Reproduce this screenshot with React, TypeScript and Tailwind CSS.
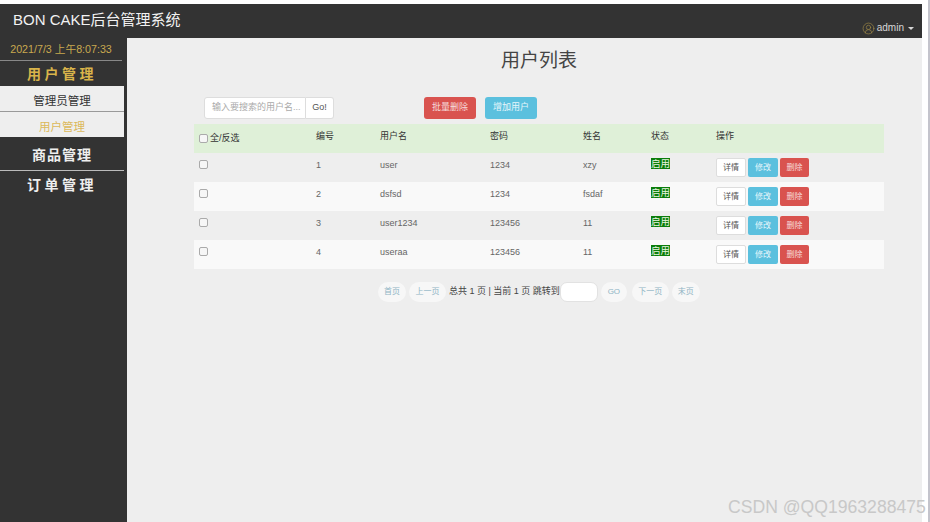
import { CircleUserRound } from 'lucide-react';

const font = "font-['Liberation_Sans','Noto_Sans_CJK_SC',sans-serif]";

const users = [
  { id: 1, name: 'user', pwd: '1234', real: 'xzy' },
  { id: 2, name: 'dsfsd', pwd: '1234', real: 'fsdaf' },
  { id: 3, name: 'user1234', pwd: '123456', real: '11' },
  { id: 4, name: 'useraa', pwd: '123456', real: '11' },
];

function PageButton({ label, className }: { label: string; className: string }) {
  return (
    <span className={`flex h-[20px] items-center justify-center rounded-full bg-[#f7f7f7] text-[8px] text-[#8fb4c4] ${className}`}>
      {label}
    </span>
  );
}

function Check() {
  return <input type="checkbox" className="block h-[9px] w-[9px] shrink-0 appearance-none rounded-[2px] border border-[#aaaaaa] bg-[#f6f6f6]" />;
}

export default function App() {
  return (
    <div className={`${font} relative flex h-[522px] w-[930px] overflow-hidden bg-white pt-1`}>
      <div className="flex h-[518px] w-[922px] flex-col bg-[#eeeeee]">
        {/* Header */}
        <div className="flex h-[34px] shrink-0 items-center justify-between bg-[#333333] pl-[13px] pr-[8px]">
          <span className="mb-[4px] text-[15px] leading-none text-[#f2f2f2]">BON CAKE后台管理系统</span>
          <span className="mt-[14px] flex items-center gap-[2px] text-[10px] leading-none text-[#d8d8d8]">
            <CircleUserRound size={13} strokeWidth={1.2} className="text-[#a08a45]" />
            admin
            <span className="ml-[2px] h-0 w-0 border-x-[3px] border-t-[3px] border-x-transparent border-t-[#d8d8d8]" />
          </span>
        </div>

        <div className="flex min-h-0 flex-1">
          {/* Sidebar */}
          <div className="flex w-[127px] shrink-0 flex-col bg-[#333333]">
            <div className="flex h-[23px] w-[122px] items-center justify-center border-b border-[#888888] text-[10.7px] text-[#c9a94f]">
              2021/7/3 上午8:07:33
            </div>
            <div className="flex h-[25px] w-[124px] items-center justify-center pt-[1px] text-[14px] font-bold tracking-[3.5px] text-[#d9b44a]">
              用户管理
            </div>
            <div className="flex h-[26px] w-[124px] items-center justify-center border-b border-[#999999] bg-[#eeeeee] pt-[6px] text-[11.5px] text-[#333333]">
              管理员管理
            </div>
            <div className="flex h-[25px] w-[124px] items-center justify-center bg-[#eeeeee] pt-[6px] text-[11.5px] text-[#dcb95a]">
              用户管理
            </div>
            <div className="flex h-[34px] w-[124px] items-center justify-center border-b border-[#bbbbbb] pt-[3px] text-[14px] font-bold tracking-[1px] text-[#eeeeee]">
              商品管理
            </div>
            <div className="flex h-[28px] w-[124px] items-center justify-center text-[14px] font-bold tracking-[3.5px] text-[#eeeeee]">
              订单管理
            </div>
          </div>

          {/* Content */}
          <div className="flex-1 pl-[67px]">
            <div className="w-[690px]">
              <h1 className="pt-[10px] text-center text-[19px] font-normal leading-[26px] text-[#444444]">用户列表</h1>

              <div className="mt-[23px] flex h-[24px] items-start pl-[10px]">
                <div className="flex h-[22px] w-[102px] items-center rounded-l-[3px] border border-[#dddddd] bg-white pl-[7px] text-[9px] text-[#aaaaaa]">
                  输入要搜索的用户名...
                </div>
                <div className="flex h-[22px] w-[28px] items-center justify-center rounded-r-[3px] border border-l-0 border-[#dddddd] bg-white text-[9px] text-[#555555]">
                  Go!
                </div>
                <button className="ml-[90px] flex h-[22px] w-[52px] items-center justify-center rounded-[3px] bg-[#d9534f] text-[9px] text-[#f6dcdb]">
                  批量删除
                </button>
                <button className="ml-[9px] flex h-[22px] w-[52px] items-center justify-center rounded-[3px] bg-[#5bc0de] text-[9px] text-[#e6f6fb]">
                  增加用户
                </button>
              </div>

              <table className="mt-[3px] w-[690px] table-fixed border-collapse text-left text-[9px] text-[#666666]">
                <colgroup>
                  <col className="w-[117px]" />
                  <col className="w-[64px]" />
                  <col className="w-[110px]" />
                  <col className="w-[93px]" />
                  <col className="w-[68px]" />
                  <col className="w-[65px]" />
                  <col />
                </colgroup>
                <thead>
                  <tr className="h-[29px] bg-[#dff0d8] text-[#333333]">
                    <th className="pl-[5px] font-normal">
                      <span className="flex items-center gap-[2px]">
                        <Check />
                        全/反选
                      </span>
                    </th>
                    <th className="pb-[4px] pl-[5px] font-normal">编号</th>
                    <th className="pb-[4px] pl-[5px] font-normal">用户名</th>
                    <th className="pb-[4px] pl-[5px] font-normal">密码</th>
                    <th className="pb-[4px] pl-[5px] font-normal">姓名</th>
                    <th className="pb-[4px] pl-[5px] font-normal">状态</th>
                    <th className="pb-[4px] pl-[5px] font-normal">操作</th>
                  </tr>
                </thead>
                <tbody>
                  {users.map((u, i) => (
                    <tr key={u.id} className={`h-[29px] ${i % 2 === 1 ? 'bg-[#f9f9f9]' : ''}`}>
                      <td className="pb-[6px] pl-[5px]">
                        <Check />
                      </td>
                      <td className="pb-[4px] pl-[5px]">{u.id}</td>
                      <td className="pb-[4px] pl-[5px]">{u.name}</td>
                      <td className="pb-[4px] pl-[5px]">{u.pwd}</td>
                      <td className="pb-[4px] pl-[5px]">{u.real}</td>
                      <td className="pb-[5px] pl-[5px]">
                        <span className="inline-block bg-[#0b7d0b] text-[9.5px] leading-[11px] text-[#e8f5e0]">启用</span>
                      </td>
                      <td className="pl-[5px]">
                        <div className="flex items-center gap-[2px] text-[8px]">
                          <button className="flex h-[19px] w-[30px] items-center justify-center rounded-[2px] border border-[#dddddd] bg-white text-[#555555]">
                            详情
                          </button>
                          <button className="flex h-[19px] w-[30px] items-center justify-center rounded-[2px] bg-[#5bc0de] text-[#e6f6fb]">
                            修改
                          </button>
                          <button className="flex h-[19px] w-[29px] items-center justify-center rounded-[2px] bg-[#d9534f] text-[#f6dcdb]">
                            删除
                          </button>
                        </div>
                      </td>
                    </tr>
                  ))}
                </tbody>
              </table>

              {/* Pagination */}
              <div className="mt-[13px] flex items-center pl-[184px] text-[9px] text-[#444444]">
                <PageButton label="首页" className="w-[28px]" />
                <PageButton label="上一页" className="ml-[3px] w-[37px]" />
                <span className="ml-[3px]">总共 1 页 | 当前 1 页 跳转到</span>
                <span className="h-[20px] w-[38px] rounded-[7px] border border-[#e2e2e2] bg-white" />
                <PageButton label="GO" className="ml-[3px] w-[26px]" />
                <PageButton label="下一页" className="ml-[5px] w-[37px]" />
                <PageButton label="末页" className="ml-[3px] w-[28px]" />
              </div>
            </div>
          </div>
        </div>
      </div>

      {/* Page edge */}
      <div className="ml-[6px] h-[522px] w-[2px] -translate-y-1 bg-[#c4c4cc]" />

      {/* Watermark */}
      <span className="absolute left-[728px] top-[497px] text-[17.6px] leading-[20px] text-[#c8c8c8]">CSDN @QQ1963288475</span>
    </div>
  );
}
